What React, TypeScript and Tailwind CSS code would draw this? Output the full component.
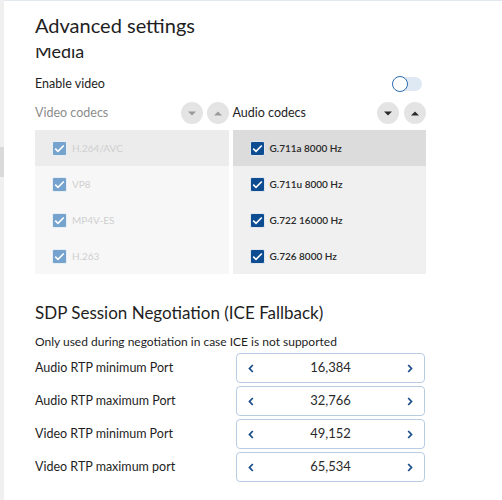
import React from "react";

const Check = ({ disabled }: { disabled?: boolean }) => (
  <div
    className={
      "w-[15px] h-[15px] rounded-[2px] flex items-center justify-center shrink-0 border " +
      (disabled ? "bg-[#76a3cd] border-[#e8eef5]" : "bg-[#0e4c92] border-[#dfe6ee]")
    }
  >
    <svg width="11" height="9" viewBox="0 0 11 9">
      <path d="M1.2 4.6 L4 7.3 L9.8 1.5" fill="none" stroke="white" strokeWidth="1.6" />
    </svg>
  </div>
);

const RoundBtn = ({ up, disabled }: { up?: boolean; disabled?: boolean }) => (
  <div className="w-[22px] h-[22px] rounded-full bg-[#e4e4e4] flex items-center justify-center">
    <svg width="8" height="5" viewBox="0 0 8 5">
      <path
        d={up ? "M0 4.5 L4 0.5 L8 4.5 Z" : "M0 0.5 L8 0.5 L4 4.5 Z"}
        fill={disabled ? "#9a9a9a" : "#2a2a2a"}
      />
    </svg>
  </div>
);

const Spin = ({ value }: { value: string }) => (
  <div className="w-[189px] h-[30px] border border-[#b9cde2] rounded-[4px] flex items-center justify-between px-[11px]">
    <svg width="6" height="9" viewBox="0 0 6 9">
      <path d="M4.8 1 L1.5 4.5 L4.8 8" fill="none" stroke="#1c4f8c" strokeWidth="1.8" />
    </svg>
    <span className="text-[13px] text-[#2a2a2a]">{value}</span>
    <svg width="6" height="9" viewBox="0 0 6 9">
      <path d="M1.2 1 L4.5 4.5 L1.2 8" fill="none" stroke="#1c4f8c" strokeWidth="1.8" />
    </svg>
  </div>
);

export default function App() {
  const video = ["H.264/AVC", "VP8", "MP4V-ES", "H.263"];
  const audio = ["G.711a 8000 Hz", "G.711u 8000 Hz", "G.722 16000 Hz", "G.726 8000 Hz"];
  const ports = [
    ["Audio RTP minimum Port", "16,384"],
    ["Audio RTP maximum Port", "32,766"],
    ["Video RTP minimum Port", "49,152"],
    ["Video RTP maximum port", "65,534"],
  ];
  return (
    <div
      className="w-[502px] h-[500px] overflow-hidden bg-white flex text-[#1e1e1e]"
      style={{ fontFamily: 'Lato, "Noto Sans", sans-serif' }}
    >
      <div className="w-[4px] h-full bg-[#f0f0f0] flex flex-col">
        <div className="h-[147px]" />
        <div className="h-[30px] bg-[#dadada]" />
      </div>
      <div className="flex-1 flex flex-col border-t border-[#e2e8ef]">
        <div className="h-[47px] pl-[31px] pt-[10px]">
          <div className="text-[20px] leading-[28px]">Advanced settings</div>
        </div>
        <div className="flex-1 overflow-hidden">
          <div className="mt-[-9px] pl-[31px] w-[422px] flex flex-col">
            <div className="h-[24px] text-[18px] leading-[24px]">Media</div>
            <div className="h-[20px] mt-[11px] flex items-center justify-between text-[12.5px]">
              <span>Enable video</span>
              <div className="relative w-[30px] h-[16px] mr-[4px] flex items-center">
                <div className="absolute left-[3px] right-0 h-[14px] rounded-full bg-[#dfe9f4]" />
                <div className="absolute left-0 w-[16px] h-[16px] rounded-full bg-white border-[1.5px] border-[#2b6cb0]" />
              </div>
            </div>
            <div className="h-[22px] mt-[8px] flex gap-[4px]">
              <div className="flex-1 flex items-center justify-between">
                <span className="text-[12.5px] text-[#8c8c8c]">Video codecs</span>
                <div className="flex gap-[4px]">
                  <RoundBtn disabled />
                  <RoundBtn up disabled />
                </div>
              </div>
              <div className="flex-1 flex items-center justify-between">
                <span className="text-[12.5px] text-[#1e1e1e]">Audio codecs</span>
                <div className="flex gap-[5px]">
                  <RoundBtn />
                  <RoundBtn up />
                </div>
              </div>
            </div>
            <div className="mt-[6px] flex gap-[4px]">
              <div className="flex-1 flex flex-col">
                {video.map((v, i) => (
                  <div
                    key={v}
                    className={
                      "h-[36px] flex items-center pl-[17px] gap-[5px] " +
                      (i === 0 ? "bg-[#ececec]" : "bg-[#f7f7f7]")
                    }
                  >
                    <Check disabled />
                    <span className="text-[10px] text-[#cfcfcf]">{v}</span>
                  </div>
                ))}
              </div>
              <div className="flex-1 flex flex-col">
                {audio.map((v, i) => (
                  <div
                    key={v}
                    className={
                      "h-[36px] flex items-center pl-[17px] gap-[5px] " +
                      (i === 0 ? "bg-[#dcdcdc]" : "bg-[#f0f0f0]")
                    }
                  >
                    <Check />
                    <span className="text-[10px] font-semibold text-[#2a2a2a]">{v}</span>
                  </div>
                ))}
              </div>
            </div>
            <div className="mt-[27px] h-[24px] text-[17px] leading-[24px]">
              SDP Session Negotiation (ICE Fallback)
            </div>
            <div className="h-[20px] mt-[7px] text-[12px] leading-[20px]">
              Only used during negotiation in case ICE is not supported
            </div>
            <div className="mt-[1px] flex flex-col gap-[3px]">
              {ports.map(([l, v]) => (
                <div key={l} className="flex items-center justify-between pr-[1px]">
                  <span className="text-[12.5px]">{l}</span>
                  <Spin value={v} />
                </div>
              ))}
            </div>
          </div>
        </div>
      </div>
    </div>
  );
}
